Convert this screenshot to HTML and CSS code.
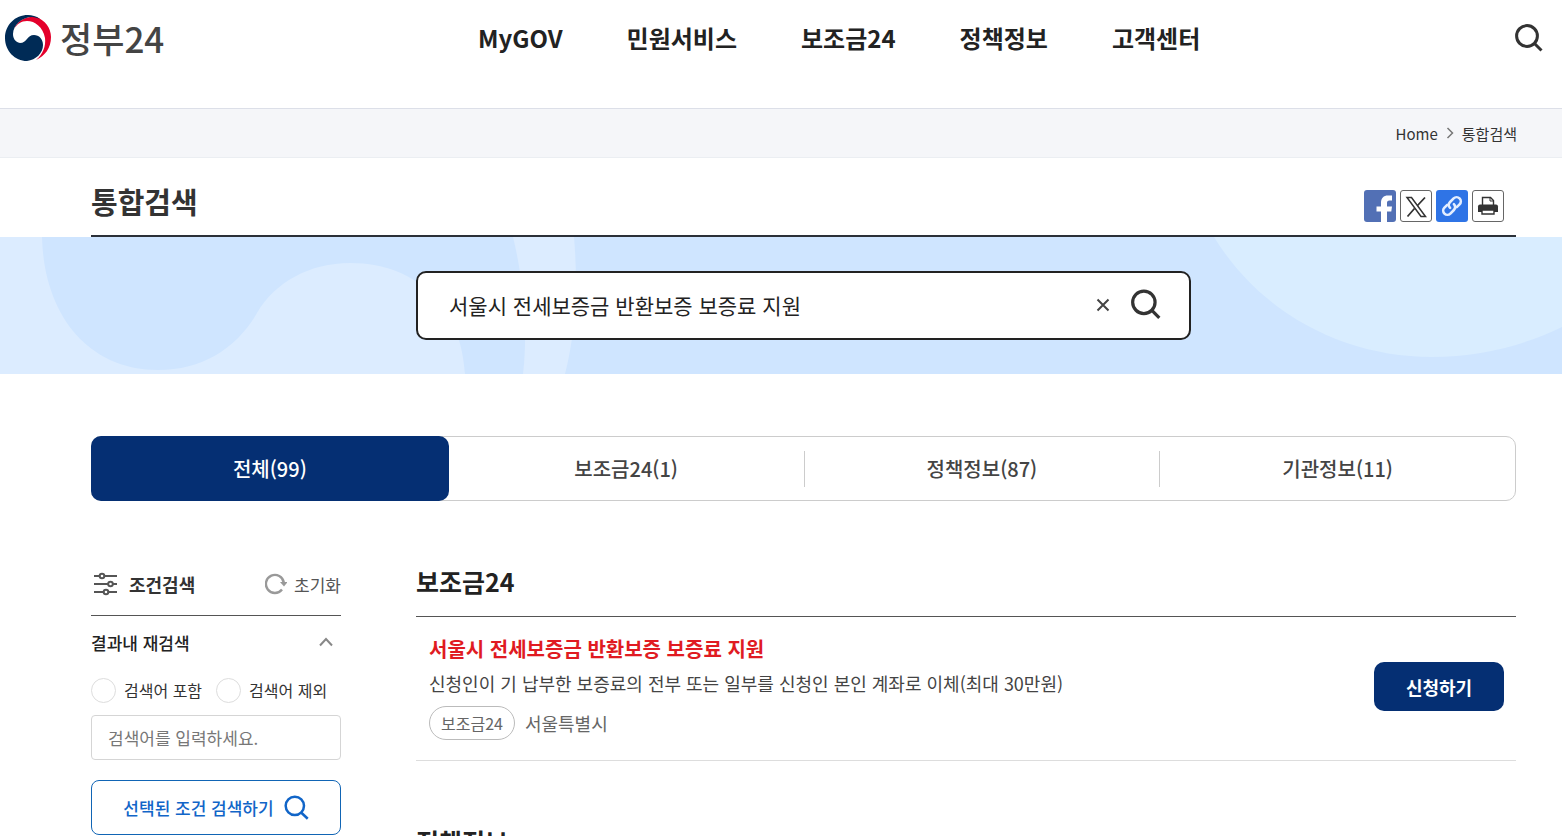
FILE: index.html
```html
<!DOCTYPE html>
<html lang="ko">
<head>
<meta charset="utf-8">
<meta name="viewport" content="width=device-width, initial-scale=1">
<title>통합검색 | 정부24</title>
<link rel="stylesheet" href="styles.css">
</head>
<body>
<div class="page">
  <header class="header">
    <a class="logo" href="#">
      <svg class="logo-mark" viewBox="0 0 46 46" aria-hidden="true">
        <circle cx="23" cy="23" r="23" fill="#fff"/>
        <path fill="#e4002b" d="M9 14C13 5 22 1 31 2C40 5 46 13 46 22C46 33 40 41 31 45C38 39 41 31 40 23C38 12 30 6 22 6C16 6 12 9 9 14Z"/>
        <path fill="#002b56" d="M35 4C31 1 27 0 23 0C10 0 0 10 0 23C0 36 10 46 22 46C31 45 38 38 38 30C38 24 34 20 29 20C22 20 22 28 15 28C10 27 8 23 8 19C8 10 17 2 27 2C30 2 32 3 35 4Z"/>
      </svg>
      <span class="logo-text">정부24</span>
    </a>
    <nav class="gnb">
      <a href="#">MyGOV</a>
      <a href="#">민원서비스</a>
      <a href="#">보조금24</a>
      <a href="#">정책정보</a>
      <a href="#">고객센터</a>
    </nav>
    <button class="icon-button" type="button" aria-label="검색">
      <svg class="icon-search" viewBox="0 0 30 30" aria-hidden="true"><circle cx="13" cy="13" r="10.400"/><path d="M20.500 20.500L27.500 27.500"/></svg>
    </button>
  </header>

  <div class="breadcrumb">
    <a href="#">Home</a>
    <svg class="crumb-arrow" viewBox="0 0 8 12" aria-hidden="true"><path d="M1.500 1L6.500 6L1.500 11"/></svg>
    <a href="#">통합검색</a>
  </div>

  <div class="title-wrap">
    <div class="title-bar">
      <h1>통합검색</h1>
      <div class="share">
        <button class="share-button facebook" type="button" aria-label="페이스북">
          <svg viewBox="0 0 32 32" aria-hidden="true"><path fill="#fff" d="M17 32V21.500H12.500V16.500H17V13C17 8 19.500 5.500 24 5.500H28V10.500H25.500C23.500 10.500 23 11.500 23 13V16.500H28L27.300 21.500H23V32Z"/></svg>
        </button>
        <button class="share-button outlined" type="button" aria-label="엑스">
          <svg viewBox="0 0 30 30" aria-hidden="true"><g fill="none" stroke="#333"><path stroke-width="1.500" d="M6 6.500H10.500L24.500 25.500H20Z"/><path stroke-width="1.800" d="M24 6.500L16.500 14.500M13.500 17.500L6.500 25.500"/></g></svg>
        </button>
        <button class="share-button link" type="button" aria-label="주소 복사">
          <svg viewBox="0 0 32 32" aria-hidden="true"><g transform="rotate(-45 16 16)" fill="none" stroke="#e4eeff" stroke-width="2.600" stroke-linecap="round"><path d="M13.500 11.800H9.500A4.200 4.200 0 0 0 9.500 20.200H14.500A4.200 4.200 0 0 0 18.700 16"/><path d="M18.500 20.200H22.500A4.200 4.200 0 0 0 22.500 11.800H17.500A4.200 4.200 0 0 0 13.300 16"/></g></svg>
        </button>
        <button class="share-button outlined" type="button" aria-label="인쇄">
          <svg viewBox="0 0 30 30" aria-hidden="true"><path d="M9.500 14V6.500H17.500L20.500 9.500V14" fill="#fff" stroke="#333" stroke-width="1.400"/><path d="M17 6.500V10H20.500" fill="none" stroke="#333"/><path fill="#333" d="M7 13.500H23Q25 13.500 25 15.500V21H5V15.500Q5 13.500 7 13.500Z"/><path d="M9 19H21V23H9Z" fill="#fff" stroke="#333" stroke-width="1.400"/></svg>
        </button>
      </div>
    </div>
  </div>

  <div class="banner">
    <svg class="banner-art" viewBox="0 0 1562 137" preserveAspectRatio="none" aria-hidden="true">
      <path fill="#dcecff" d="M0 0H42C44 80 90 133 158 133C202 133 236 112 257 76C275 45 310 26 350 26C422 26 462 76 465 137H0Z"/>
      <path fill="#dcecff" d="M513 0C524 45 528 95 523 137H565C576 95 578 45 574 0Z"/>
      <path fill="#d9edff" d="M1214 0C1262 78 1345 120 1432 120C1480 120 1525 108 1562 90V0Z"/>
    </svg>
    <form class="search">
      <input class="search-input" type="text" aria-label="검색어" value="서울시 전세보증금 반환보증 보증료 지원">
      <button class="icon-button" type="button" aria-label="지우기">
        <svg class="icon-clear" viewBox="0 0 14 14" aria-hidden="true"><path d="M1.500 1.500L12.500 12.500M12.500 1.500L1.500 12.500"/></svg>
      </button>
      <button class="icon-button" type="button" aria-label="검색">
        <svg class="icon-search large" viewBox="0 0 30 30" aria-hidden="true"><circle cx="13" cy="12.500" r="10.500"/><path d="M20.500 20L27.500 27"/></svg>
      </button>
    </form>
  </div>

  <main class="content">
    <nav class="tabs">
      <a class="tab active" href="#">전체(99)</a>
      <a class="tab" href="#">보조금24(1)</a>
      <a class="tab" href="#">정책정보(87)</a>
      <a class="tab" href="#">기관정보(11)</a>
    </nav>

    <div class="columns">
      <aside class="filter">
        <div class="filter-head">
          <svg class="icon-filter" viewBox="0 0 24 24" aria-hidden="true"><path d="M0 4H23M0 12H23M0 20H23"/><circle cx="8" cy="4" r="2.300"/><circle cx="16.500" cy="12" r="2.300"/><circle cx="12" cy="20" r="2.300"/></svg>
          <h2>조건검색</h2>
          <button class="reset" type="button">
            <svg class="icon-reset" viewBox="0 0 22 22" aria-hidden="true"><path d="M17 16.500A9 9 0 1 1 18.800 9.500" fill="none" stroke="#999" stroke-width="2.400"/><path d="M15 9H22.500L19 13.500Z" fill="#999"/></svg>
            초기화
          </button>
        </div>
        <button class="fold" type="button" aria-expanded="true">
          결과내 재검색
          <svg class="icon-fold" viewBox="0 0 14 10" aria-hidden="true"><path d="M1 8.500L7 2L13 8.500"/></svg>
        </button>
        <div class="radios">
          <label class="radio"><input type="radio" name="scope">검색어 포함</label>
          <label class="radio"><input type="radio" name="scope">검색어 제외</label>
        </div>
        <input class="keyword" type="text" aria-label="검색어 입력" placeholder="검색어를 입력하세요.">
        <button class="filter-submit" type="button">
          선택된 조건 검색하기
          <svg class="icon-search blue" viewBox="0 0 30 30" aria-hidden="true"><circle cx="13" cy="13" r="11"/><path d="M20.500 21L28.500 28.500"/></svg>
        </button>
      </aside>

      <div class="results">
        <section class="section">
          <h2>보조금24</h2>
          <article class="item">
            <div class="item-body">
              <a class="item-title" href="#">서울시 전세보증금 반환보증 보증료 지원</a>
              <p class="item-desc">신청인이 기 납부한 보증료의 전부 또는 일부를 신청인 본인 계좌로 이체(최대 30만원)</p>
              <div class="item-meta"><span class="chip">보조금24</span><span>서울특별시</span></div>
            </div>
            <button class="apply" type="button">신청하기</button>
          </article>
        </section>
        <section class="section">
          <h2>정책정보</h2>
        </section>
      </div>
    </div>
  </main>
</div>
</body>
</html>
```
FILE: styles.css
```css
* {
  box-sizing: border-box;
}

body {
  margin: 0;
  background: #fff;
  color: #222;
  font-family: "Noto Sans CJK KR", "Noto Sans", sans-serif;
  font-size: 16px;
}

a {
  color: inherit;
  text-decoration: none;
}

h1,
h2,
p {
  margin: 0;
}

button,
input {
  margin: 0;
  font-family: inherit;
  color: inherit;
}

button {
  padding: 0;
  border: 0;
  background: none;
  cursor: pointer;
}

svg {
  display: block;
  flex: none;
}

.page {
  height: 100vh;
  overflow: hidden;
}

.header {
  display: flex;
  align-items: center;
  padding: 11px 18px 43px 5px;
}

.logo {
  display: flex;
  align-items: center;
  gap: 9px;
}

.logo-mark {
  width: 46px;
  height: 46px;
}

.logo-text {
  color: #444;
  font-size: 35px;
  font-weight: 500;
  line-height: 54px;
}

.gnb {
  display: flex;
  flex: 1;
  justify-content: center;
  gap: 64px;
  font-size: 24px;
  font-weight: 700;
  line-height: 36px;
}

.icon-button {
  display: flex;
}

.icon-search {
  width: 30px;
  height: 30px;
  fill: none;
  stroke: #333;
  stroke-width: 3;
}

.icon-search.large {
  width: 32px;
  height: 32px;
}

.icon-search.blue {
  width: 25px;
  height: 25px;
  stroke: #1165c8;
}

.breadcrumb {
  display: flex;
  align-items: center;
  justify-content: flex-end;
  gap: 8px;
  height: 50px;
  padding: 0 45px 0 91px;
  border-top: 1px solid #dcdfe8;
  border-bottom: 1px solid #ebeef2;
  background: #f5f6f9;
  color: #333;
  font-size: 15px;
}

.crumb-arrow {
  width: 8px;
  height: 12px;
  fill: none;
  stroke: #777;
  stroke-width: 1.5;
}

.title-wrap {
  padding: 0 46px 0 91px;
}

.title-bar {
  display: flex;
  align-items: center;
  justify-content: space-between;
  padding: 23px 12px 10px 0;
  border-bottom: 2px solid #2b3038;
}

h1 {
  padding-bottom: 4px;
  color: #333;
  font-size: 29px;
  font-weight: 700;
  line-height: 40px;
}

.share {
  display: flex;
  gap: 4px;
  padding-top: 5px;
}

.share-button {
  width: 32px;
  height: 32px;
  border-radius: 3px;
  overflow: hidden;
}

.share-button svg {
  width: 100%;
  height: 100%;
}

.facebook {
  background: #5270b5;
}

.link {
  background: #2f74e6;
}

.outlined {
  border: 1px solid #666;
}

.banner {
  position: relative;
  padding: 34px 46px 34px 91px;
  background: #cfe5ff;
}

.banner-art {
  position: absolute;
  inset: 0;
  width: 100%;
  height: 100%;
}

.search {
  position: relative;
  display: flex;
  align-items: center;
  gap: 20px;
  max-width: 775px;
  height: 69px;
  margin: 0 auto;
  padding: 0 27px 2px 31px;
  border: 2px solid #222;
  border-radius: 10px;
  background: #fff;
}

.search-input {
  flex: 1;
  min-width: 0;
  padding: 0;
  border: 0;
  outline: 0;
  background: none;
  font-size: 21px;
}

.icon-clear {
  width: 14px;
  height: 14px;
  fill: none;
  stroke: #444;
  stroke-width: 2;
}

.content {
  padding: 62px 46px 0 91px;
}

.tabs {
  display: grid;
  grid-template-columns: repeat(4, 1fr);
  align-items: center;
  height: 65px;
  border: 1px solid #ccc;
  border-radius: 10px;
  color: #444;
  font-size: 20px;
  font-weight: 500;
}

.tab {
  border-left: 1px solid #ccc;
  line-height: 36px;
  text-align: center;
}

.tab.active {
  margin: -1px;
  border: 0;
  border-radius: 10px;
  background: #052f73;
  color: #fff;
  line-height: 65px;
}

.tab.active + .tab {
  border-color: transparent;
}

.columns {
  display: grid;
  grid-template-columns: 250px 1fr;
  gap: 75px;
  padding-top: 63px;
}

.filter {
  display: flex;
  flex-direction: column;
}

.filter-head {
  display: flex;
  align-items: center;
  gap: 11px;
  height: 52px;
  padding: 0 0 11px 3px;
  border-bottom: 1px solid #555;
}

.filter-head h2 {
  flex: 1;
  color: #333;
  font-size: 18px;
  font-weight: 700;
}

.icon-filter {
  width: 24px;
  height: 24px;
  fill: #fff;
  stroke: #555;
  stroke-width: 2;
}

.reset {
  display: flex;
  align-items: center;
  gap: 7px;
  color: #555;
  font-size: 17px;
}

.icon-reset {
  width: 22px;
  height: 22px;
}

.fold {
  display: flex;
  align-items: center;
  justify-content: space-between;
  height: 54px;
  padding: 0 8px 2px 0;
  font-size: 17px;
  font-weight: 500;
}

.icon-fold {
  width: 14px;
  height: 10px;
  fill: none;
  stroke: #888;
  stroke-width: 2;
}

.radios {
  display: flex;
  gap: 14px;
  padding: 8px 0 12px;
}

.radio {
  display: flex;
  align-items: center;
  gap: 8px;
  color: #333;
  line-height: 25px;
  white-space: nowrap;
}

.radio input {
  appearance: none;
  width: 25px;
  height: 25px;
  border: 1px solid #ddd;
  border-radius: 50%;
  background: #fff;
}

.radio input:checked {
  border: 8px solid #052f73;
}

.keyword {
  height: 45px;
  padding: 0 16px;
  border: 1px solid #d5d5d5;
  border-radius: 4px;
  font-size: 17px;
}

.keyword::placeholder {
  color: #777;
}

.filter-submit {
  display: flex;
  align-items: center;
  justify-content: center;
  gap: 10px;
  height: 55px;
  margin-top: 20px;
  border: 1px solid #1165b5;
  border-radius: 8px;
  color: #1165c8;
  font-size: 17px;
  font-weight: 500;
}

.section {
  padding-bottom: 63px;
}

.section h2 {
  padding-bottom: 18px;
  border-bottom: 1px solid #555;
  font-size: 25px;
  font-weight: 700;
  line-height: 34px;
}

.item {
  display: flex;
  align-items: center;
  justify-content: space-between;
  padding: 16px 12px 20px 13px;
  border-bottom: 1px solid #ddd;
}

.item-title {
  display: block;
  color: #e01b22;
  font-size: 20px;
  font-weight: 700;
  line-height: 32px;
}

.item-desc {
  padding-top: 2px;
  color: #444;
  font-size: 18px;
  line-height: 32px;
}

.item-meta {
  display: flex;
  align-items: center;
  gap: 10px;
  padding-top: 7px;
  color: #666;
  font-size: 18px;
  line-height: 32px;
}

.chip {
  padding: 0 11px;
  border: 1px solid #bbb;
  border-radius: 17px;
  font-size: 16px;
}

.apply {
  flex: none;
  width: 130px;
  height: 49px;
  border-radius: 10px;
  background: #052f73;
  color: #fff;
  font-size: 18px;
  font-weight: 700;
}
```
